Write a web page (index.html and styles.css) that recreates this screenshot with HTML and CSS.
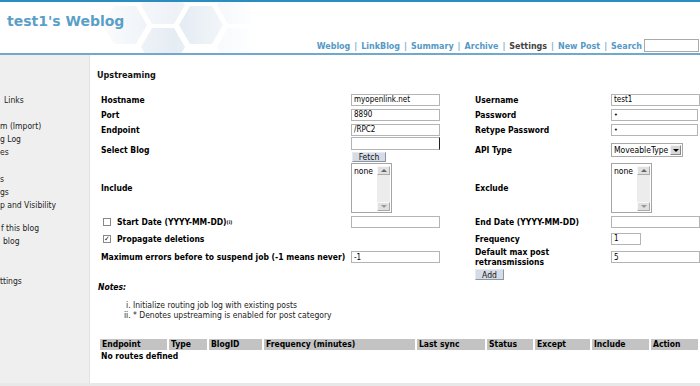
FILE: index.html
```html
<!DOCTYPE html>
<html lang="en">
<head>
    <meta charset="UTF-8">
    <title>test1's Weblog - Upstreaming</title>
    <link rel="stylesheet" href="styles.css">
</head>
<body>

    <!-- Cabecalho -->
    <div class="header">
        <svg class="hex-bg" width="150" height="51" viewBox="0 0 150 51">
            <defs>
                <linearGradient id="fade" x1="0" y1="0" x2="1" y2="0">
                    <stop offset="0" stop-color="#fff" stop-opacity="0.2"/>
                    <stop offset="0.5" stop-color="#fff" stop-opacity="1"/>
                    <stop offset="1" stop-color="#fff" stop-opacity="0.1"/>
                </linearGradient>
                <mask id="m">
                    <rect width="150" height="51" fill="url(#fade)"/>
                </mask>
            </defs>
            <g mask="url(#m)">
                <polygon points="14,4 36,4 47,23 36,42 14,42 3,23" fill="#e9eff5"/>
                <polygon points="52,-16 74,-16 85,3 74,22 52,22 41,3" fill="#eef2f7"/>
                <polygon points="52,26 74,26 85,45 74,64 52,64 41,45" fill="#e5ecf3"/>
                <polygon points="90,4 112,4 123,23 112,42 90,42 79,23" fill="#e2eaf2"/>
                <polygon points="128,-16 150,-16 161,3 150,22 128,22 117,3" fill="#ebf0f6"/>
                <polygon points="128,26 150,26 161,45 150,64 128,64 117,45" fill="#f0f4f8"/>
            </g>
        </svg>
        <div class="title">test1's Weblog</div>
        <div class="nav">
            <a href="#">Weblog</a><span class="sep">|</span>
            <a href="#">LinkBlog</a><span class="sep">|</span>
            <a href="#">Summary</a><span class="sep">|</span>
            <a href="#">Archive</a><span class="sep">|</span>
            <a href="#" class="current">Settings</a><span class="sep">|</span>
            <a href="#">New Post</a><span class="sep">|</span>
            <a href="#">Search</a>
            <input type="text" class="search-box">
        </div>
    </div>

    <div class="main">
        <!-- Menu lateral -->
        <div class="sidebar">
            <div class="side-group first">
                <div class="ind4">Links</div>
            </div>
            <div class="side-group g2">
                <div>m (Import)</div>
                <div>g Log</div>
                <div>es</div>
            </div>
            <div class="side-group g3">
                <div>s</div>
                <div>gs</div>
                <div>p and Visibility</div>
            </div>
            <div class="side-group g4">
                <div class="ind1">f this blog</div>
                <div class="ind3">blog</div>
            </div>
            <div class="side-group g5">
                <div>ttings</div>
            </div>
        </div>

        <!-- Conteudo -->
        <div class="content">
            <h2>Upstreaming</h2>

            <div class="up-form">
                <div class="lbl">Hostname</div>
                <div class="fld"><input type="text" class="txt" value="myopenlink.net"></div>
                <div class="lbl">Username</div>
                <div class="fld"><input type="text" class="txt" value="test1"></div>

                <div class="lbl">Port</div>
                <div class="fld"><input type="text" class="txt" value="8890"></div>
                <div class="lbl">Password</div>
                <div class="fld"><input type="text" class="txt pw" value="&#8226;"></div>

                <div class="lbl">Endpoint</div>
                <div class="fld"><input type="text" class="txt" value="/RPC2"></div>
                <div class="lbl">Retype Password</div>
                <div class="fld"><input type="text" class="txt pw" value="&#8226;"></div>

                <div class="lbl">Select Blog</div>
                <div class="fld stack">
                    <input type="text" class="txt caret">
                    <button class="btn btn-fetch">Fetch</button>
                </div>
                <div class="lbl">API Type</div>
                <div class="fld">
                    <div class="dropdown"><span>MoveableType</span><span class="dd-btn"></span></div>
                </div>

                <div class="lbl">Include</div>
                <div class="fld">
                    <div class="listbox">
                        <span class="opt">none</span>
                        <div class="sbar"><span class="sb-up"></span><span class="sb-down"></span></div>
                    </div>
                </div>
                <div class="lbl">Exclude</div>
                <div class="fld">
                    <div class="listbox">
                        <span class="opt">none</span>
                        <div class="sbar"><span class="sb-up"></span><span class="sb-down"></span></div>
                    </div>
                </div>

                <div class="lbl chk-lbl"><span class="chk"></span>Start Date (YYYY-MM-DD)<sup>(i)</sup></div>
                <div class="fld"><input type="text" class="txt"></div>
                <div class="lbl">End Date (YYYY-MM-DD)</div>
                <div class="fld"><input type="text" class="txt"></div>

                <div class="lbl chk-lbl"><span class="chk checked">&#10003;</span>Propagate deletions</div>
                <div class="fld"></div>
                <div class="lbl">Frequency</div>
                <div class="fld"><input type="text" class="txt short" value="1"></div>

                <div class="lbl">Maximum errors before to suspend job (-1 means never)</div>
                <div class="fld"><input type="text" class="txt" value="-1"></div>
                <div class="lbl">Default max post<br>retransmissions</div>
                <div class="fld"><input type="text" class="txt" value="5"></div>

                <div></div>
                <div></div>
                <div class="fld"><button class="btn btn-add">Add</button></div>
                <div></div>
            </div>

            <div class="notes">Notes:</div>
            <ol class="notes-list">
                <li>Initialize routing job log with existing posts</li>
                <li>* Denotes upstreaming is enabled for post category</li>
            </ol>

            <table class="routes">
                <thead>
                    <tr>
                        <th class="c-endpoint">Endpoint</th>
                        <th class="c-type">Type</th>
                        <th class="c-blogid">BlogID</th>
                        <th class="c-freq">Frequency (minutes)</th>
                        <th class="c-sync">Last sync</th>
                        <th class="c-status">Status</th>
                        <th class="c-except">Except</th>
                        <th class="c-include">Include</th>
                        <th class="c-action">Action</th>
                    </tr>
                </thead>
                <tbody>
                    <tr>
                        <td colspan="9">No routes defined</td>
                    </tr>
                </tbody>
            </table>
        </div>
    </div>

    <div class="footer"></div>

</body>
</html>
```

FILE: styles.css
```css
/* Estilos gerais */
body {
    margin: 0;
    font-family: "DejaVu Sans Condensed", "DejaVu Sans", sans-serif;
    font-stretch: condensed;
    font-size: 8.5px;
    color: #000;
    background-color: #fff;
    overflow: hidden;
}

/* Cabecalho */
.header {
    position: relative;
    height: 51px;
    border-top: 2px solid #2b8cc0;
    border-bottom: 2px solid #70a9cc;
    display: flex;
    flex-direction: column;
}

.hex-bg {
    position: absolute;
    left: 100px;
    top: 0;
}

.title {
    position: relative;
    margin: 11px 0 0 7px;
    font-family: "DejaVu Sans", sans-serif;
    font-stretch: normal;
    font-size: 14px;
    line-height: 16px;
    font-weight: bold;
    color: #5b9fc9;
}

.nav {
    position: relative;
    margin-top: auto;
    padding-bottom: 1px;
    display: flex;
    justify-content: flex-end;
    align-items: center;
    height: 13px;
    font-size: 8.9px;
    font-weight: bold;
}

.nav a {
    color: #5599c6;
    text-decoration: none;
}

.nav a.current {
    color: #444;
}

.nav .sep {
    color: #7aaccd;
    margin: 0 4px;
}

.search-box {
    width: 55px;
    height: 13px;
    box-sizing: border-box;
    margin: 0 1px 0 2px;
    border: 1px solid #aaa;
    padding: 0;
}

/* Area principal */
.main {
    display: flex;
    height: 328px;
}

.sidebar {
    width: 89px;
    flex-shrink: 0;
    background-color: #efefef;
    border-right: 1px solid #e2e2e2;
    color: #222;
    line-height: 13px;
    white-space: nowrap;
    overflow: hidden;
}

.side-group.first { margin-top: 39px; }
.side-group.g2 { margin-top: 13px; }
.side-group.g3 { margin-top: 14px; }
.side-group.g4 { margin-top: 10px; }
.side-group.g5 { margin-top: 27px; }

.ind1 { padding-left: 1px; }
.ind3 { padding-left: 3px; }
.ind4 { padding-left: 4px; }

.content {
    flex: 1;
    padding: 14px 0 0 7px;
}

.content h2 {
    margin: 0;
    font-size: 9px;
    line-height: 12px;
    color: #111;
}

/* Formulario */
.up-form {
    margin: 11px 0 0 4px;
    display: grid;
    grid-template-columns: 250px 124px 136px 87px;
    grid-template-rows: 15px 15px 15px 25px 52px 16px 17px 20px 15px;
}

.lbl {
    font-weight: bold;
    align-self: center;
    line-height: 10px;
    white-space: nowrap;
}

.fld {
    align-self: center;
    display: flex;
    align-items: center;
}

.fld.stack {
    flex-direction: column;
    align-items: flex-start;
    gap: 2px;
}

.txt {
    width: 89px;
    height: 12px;
    box-sizing: border-box;
    border: 1px solid #b4b4b4;
    padding: 0 2px;
    font-family: inherit;
    font-size: 8px;
    color: #000;
}

.txt.caret {
    height: 13px;
    border-right: 1px solid #222;
}

.txt.short {
    width: 30px;
}

.txt.pw {
    font-size: 7px;
}

.btn {
    font-family: inherit;
    font-size: 8.5px;
    line-height: 8px;
    background-color: #d5dce7;
    border: 1px solid #a7aebb;
    border-color: #e6eaf0 #8d95a3 #8d95a3 #e6eaf0;
    padding: 0;
    color: #111;
}

.btn-fetch {
    width: 34px;
    height: 10px;
    margin-left: 1px;
}

.btn-add {
    width: 29px;
    height: 11px;
}

.dropdown {
    width: 72px;
    height: 14px;
    box-sizing: border-box;
    border: 1px solid #a8a8a8;
    display: flex;
    align-items: center;
    justify-content: space-between;
    padding-left: 2px;
    font-size: 8.5px;
}

.dd-btn {
    width: 11px;
    height: 10px;
    margin-right: 1px;
    background-color: #d8d8d8;
    border: 1px solid;
    border-color: #f4f4f4 #888 #888 #f4f4f4;
    box-sizing: border-box;
    position: relative;
}

.dd-btn::after {
    content: "";
    position: absolute;
    left: 2px;
    top: 3px;
    border-left: 3px solid transparent;
    border-right: 3px solid transparent;
    border-top: 3px solid #000;
}

.listbox {
    width: 41px;
    height: 50px;
    box-sizing: border-box;
    border: 1px solid #a5a5a5;
    display: flex;
    justify-content: space-between;
    padding: 2px 1px 1px 2px;
}

.opt {
    line-height: 10px;
}

.sbar {
    width: 13px;
    background-color: #ececec;
    display: flex;
    flex-direction: column;
    justify-content: space-between;
}

.sb-up, .sb-down {
    height: 9px;
    box-sizing: border-box;
    background-color: #e0e0e0;
    border: 1px solid;
    border-color: #f8f8f8 #aaa #aaa #f8f8f8;
    position: relative;
}

.sb-up::after, .sb-down::after {
    content: "";
    position: absolute;
    left: 3px;
    top: 2px;
    border-left: 3px solid transparent;
    border-right: 3px solid transparent;
}

.sb-up::after { border-bottom: 3px solid #666; }
.sb-down::after { border-top: 3px solid #999; }

.chk-lbl {
    display: flex;
    align-items: center;
}

.chk {
    width: 8px;
    height: 8px;
    box-sizing: border-box;
    border: 1px solid #888;
    margin: 0 6px 0 2px;
    font-size: 7px;
    line-height: 6px;
    text-align: center;
    font-weight: normal;
}

sup {
    font-size: 5px;
    line-height: 0;
    vertical-align: 4px;
}

/* Notas */
.notes {
    margin-left: 1px;
    font-weight: bold;
    font-style: italic;
    line-height: 10px;
}

.notes-list {
    margin: 8px 0 0 0;
    padding-left: 36px;
    list-style-type: lower-roman;
    line-height: 10px;
    color: #222;
}

/* Tabela de rotas */
.routes {
    margin: 19px 0 0 1px;
    width: 602px;
    border-collapse: separate;
    border-spacing: 2px 0;
    table-layout: fixed;
}

.routes th {
    background-color: #c3c3c3;
    height: 11px;
    padding: 0 2px;
    text-align: left;
    line-height: 11px;
    white-space: nowrap;
    overflow: hidden;
}

.routes td {
    padding: 1px 1px;
    font-weight: bold;
    line-height: 10px;
}

.c-endpoint { width: 63px; }
.c-type { width: 34px; }
.c-blogid { width: 49px; }
.c-freq { width: 147px; }
.c-sync { width: 64px; }
.c-status { width: 42px; }
.c-except { width: 51px; }
.c-include { width: 53px; }
.c-action { width: 43px; }

.footer {
    height: 3px;
    background-color: #e8e8e8;
}
```
